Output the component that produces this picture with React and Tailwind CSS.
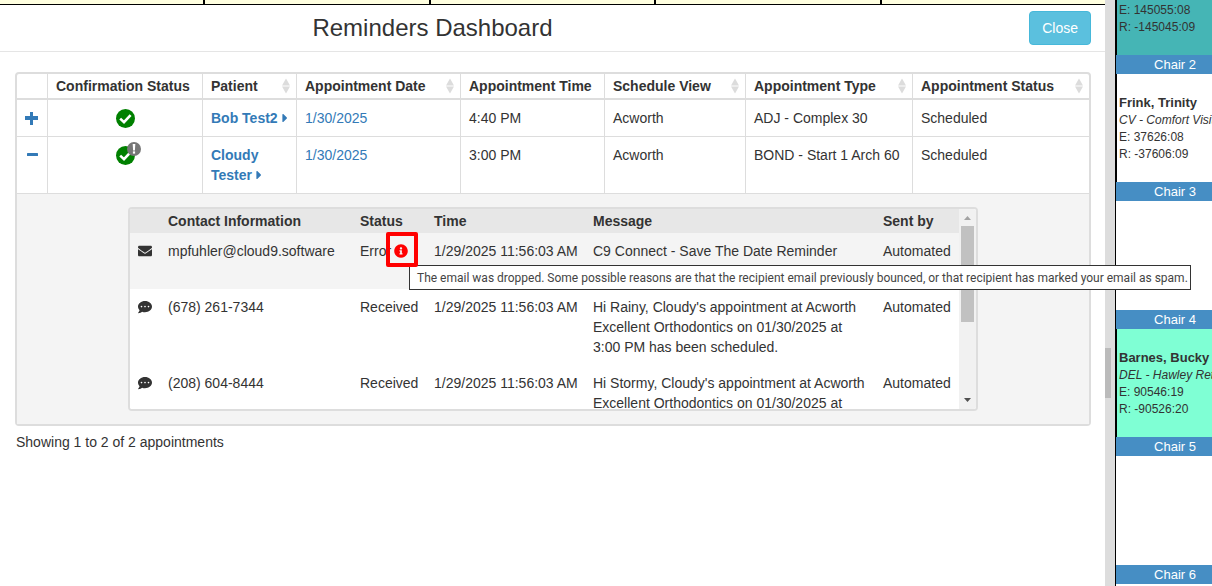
import React, { useState } from "react";
import { FaCaretRight, FaCommentDots, FaEnvelope, FaInfoCircle } from "react-icons/fa";

const columns = [
  { label: "Confirmation Status", width: "w-[155px]" },
  { label: "Patient", width: "w-[94px]", sortable: true },
  { label: "Appointment Date", width: "w-[164px]", sortable: true },
  { label: "Appointment Time", width: "w-[144px]" },
  { label: "Schedule View", width: "w-[141px]", sortable: true },
  { label: "Appointment Type", width: "w-[167px]", sortable: true },
  { label: "Appointment Status", width: "w-[176px]", sortable: true },
];

const appointments = [
  {
    id: 1,
    patient: "Bob Test2",
    date: "1/30/2025",
    time: "4:40 PM",
    view: "Acworth",
    type: "ADJ - Complex 30",
    status: "Scheduled",
    reminders: [],
  },
  {
    id: 2,
    patient: "Cloudy Tester",
    date: "1/30/2025",
    time: "3:00 PM",
    view: "Acworth",
    type: "BOND - Start 1 Arch 60",
    status: "Scheduled",
    warning: true,
    reminders: [
      {
        kind: "email",
        contact: "mpfuhler@cloud9.software",
        status: "Error",
        time: "1/29/2025 11:56:03 AM",
        message: "C9 Connect - Save The Date Reminder",
      },
      {
        kind: "text",
        contact: "(678) 261-7344",
        status: "Received",
        time: "1/29/2025 11:56:03 AM",
        message:
          "Hi Rainy, Cloudy's appointment at Acworth Excellent Orthodontics on 01/30/2025 at 3:00 PM has been scheduled.",
      },
      {
        kind: "text",
        contact: "(208) 604-8444",
        status: "Received",
        time: "1/29/2025 11:56:03 AM",
        message: "Hi Stormy, Cloudy's appointment at Acworth Excellent Orthodontics on 01/30/2025 at",
      },
    ],
  },
];

const chairs = [
  {
    name: "Chair 2",
    height: "h-[108px]",
    color: "bg-white",
    patient: "Frink, Trinity",
    procedure: "CV - Comfort Visit",
    e: "37626:08",
    r: "-37606:09",
  },
  { name: "Chair 3", height: "h-[109px]" },
  {
    name: "Chair 4",
    height: "h-[108px]",
    color: "bg-[#7fffd4]",
    patient: "Barnes, Bucky",
    procedure: "DEL - Hawley Retainer",
    e: "90546:19",
    r: "-90526:20",
  },
  { name: "Chair 5", height: "h-[109px]" },
  { name: "Chair 6", height: "h-0" },
];

function SortIcon() {
  return (
    <svg width="8" height="16" viewBox="0 0 8 16" fill="#dcdcdc">
      <path d="M4 0.5 L8 7.5 H0 Z" />
      <path d="M0 8.5 H8 L4 15.5 Z" />
    </svg>
  );
}

function ToggleIcon({ open }) {
  return (
    <svg width="13" height="13" viewBox="0 0 13 13" fill="#337ab7">
      {open ? (
        <rect x="2" y="4" width="11" height="3" rx="0.5" />
      ) : (
        <path d="M5 0h3v4h5v4H8v5H5V8H0V4h5z" />
      )}
    </svg>
  );
}

function ConfirmedIcon() {
  return (
    <svg width="19" height="19" viewBox="0 0 19 19">
      <circle cx="9.5" cy="9.5" r="9.5" fill="#008000" />
      <path d="M4.2 9.6 L8 13.2 L14.6 6.2" fill="none" stroke="#fff" strokeWidth="2.6" />
    </svg>
  );
}

function WarningIcon() {
  return (
    <svg className="absolute left-[11px] -top-1" width="14" height="14" viewBox="0 0 14 14">
      <circle cx="7" cy="7" r="7" fill="#777" />
      <path d="M5.7 2 H8.3 L7.9 8.4 H6.1 Z" fill="#fff" />
      <rect x="5.9" y="9.4" width="2.2" height="2.2" fill="#fff" />
    </svg>
  );
}

function Scrollbar() {
  return (
    <div className="w-[17px] shrink-0 bg-[#f1f1f1] flex flex-col items-center">
      <svg width="17" height="17" viewBox="0 0 17 17" fill="#a3a3a3">
        <path d="M5 11 L8.5 7 L12 11 Z" />
      </svg>
      <div className="w-[13px] h-24 bg-[#c1c1c1]" />
      <svg className="mt-auto" width="17" height="17" viewBox="0 0 17 17" fill="#505050">
        <path d="M5 6 H12 L8.5 10 Z" />
      </svg>
    </div>
  );
}

function ReminderLog({ reminders }) {
  return (
    <div className="relative">
      <div className="h-[204px] flex border-2 border-[#ddd] rounded bg-white overflow-hidden">
        <div className="flex-1 overflow-hidden">
          <table className="w-full table-fixed text-left">
            <thead>
              <tr className="bg-[#e7e7e7]">
                <th className="w-[30px] px-2 py-0.5" />
                <th className="w-[192px] px-2 py-0.5">Contact Information</th>
                <th className="w-[74px] px-2 py-0.5">Status</th>
                <th className="w-[159px] px-2 py-0.5">Time</th>
                <th className="w-[290px] px-2 py-0.5">Message</th>
                <th className="w-[84px] px-2 py-0.5">Sent by</th>
              </tr>
            </thead>
            <tbody>
              {reminders.map((item, idx) => (
                <tr key={idx} className="h-14 align-top bg-white first:bg-[#f4f4f4]">
                  <td className="p-2">
                    <div className="h-5 flex items-center">
                      {item.kind === "email" ? (
                        <FaEnvelope className="size-[14px] shrink-0" />
                      ) : (
                        <FaCommentDots className="size-[14px] shrink-0" />
                      )}
                    </div>
                  </td>
                  <td className="p-2">{item.contact}</td>
                  <td className="py-2 pl-2 whitespace-nowrap">
                    {item.status}
                    {item.status === "Error" && (
                      <FaInfoCircle className="inline ml-[3px] size-[14px] align-[-2px] text-[#f00]" />
                    )}
                  </td>
                  <td className="py-2 pl-2 whitespace-nowrap">{item.time}</td>
                  <td className="p-2">{item.message}</td>
                  <td className="py-2 pl-2">Automated</td>
                </tr>
              ))}
            </tbody>
          </table>
        </div>
        <Scrollbar />
      </div>

      {/* Error explanation */}
      <div
        role="tooltip"
        className="absolute left-[281px] top-[58px] z-10 w-[782px] h-[25px] px-[7px] flex items-center border border-[#333] bg-white whitespace-nowrap font-[Roboto,sans-serif] text-[12px] text-[#444]"
      >
        The email was dropped. Some possible reasons are that the recipient email previously bounced, or that recipient has marked your email as spam.
      </div>
      <div className="absolute left-[258px] top-[25px] z-20 w-8 h-[35px] border-4 border-[#f00] rounded-xs" />
    </div>
  );
}

function AppointmentRow({ appt, open, onToggle }) {
  const cell = "p-2 border-r border-b border-[#ddd]";

  return (
    <>
      <tr className="align-top">
        <td className="border-r border-b border-[#ddd] py-2">
          <button
            className="w-full h-5 pr-px flex items-center justify-center"
            aria-label={open ? "Collapse" : "Expand"}
            onClick={onToggle}
          >
            <ToggleIcon open={open} />
          </button>
        </td>
        <td className={cell}>
          <div className="h-5 flex items-center justify-center">
            <span className="relative">
              <ConfirmedIcon />
              {appt.warning && <WarningIcon />}
            </span>
          </div>
        </td>
        <td className="py-2 pl-2 border-r border-b border-[#ddd]">
          <a href="#" className="font-bold text-[#337ab7]">
            {appt.patient}
            <FaCaretRight className="inline size-[14px] align-[-2px]" />
          </a>
        </td>
        <td className={cell}>
          <a href="#" className="text-[#337ab7]">{appt.date}</a>
        </td>
        <td className={cell}>{appt.time}</td>
        <td className={cell}>{appt.view}</td>
        <td className={cell}>{appt.type}</td>
        <td className="p-2 border-b border-[#ddd]">{appt.status}</td>
      </tr>
      {open && (
        <tr>
          <td colSpan={8} className="bg-[#f4f4f4] px-[111px] py-[13px]">
            <ReminderLog reminders={appt.reminders} />
          </td>
        </tr>
      )}
    </>
  );
}

function ChairInfo({ patient, procedure, e, r }) {
  return (
    <div className="pl-0.5 text-[12px] leading-[17px] whitespace-nowrap">
      {patient && <p className="text-[13px] leading-[18px] font-bold">{patient}</p>}
      {procedure && <p className="italic">{procedure}</p>}
      <p>E: {e}</p>
      <p>R: {r}</p>
    </div>
  );
}

function ChairSidebar() {
  return (
    <aside className="w-[97px] shrink-0 overflow-hidden border-l border-black">
      <div className="w-[118px]">
        <div className="h-[55px] pt-0.5 border-l border-black bg-[#45b5b5]">
          <ChairInfo e="145055:08" r="-145045:09" />
        </div>
        {chairs.map((chair) => (
          <section key={chair.name}>
            <h2 className="h-[19px] bg-[#468ec4] text-white text-[13px] leading-[19px] text-center">
              {chair.name}
            </h2>
            {chair.patient ? (
              <div className={`${chair.height} ${chair.color} pt-5 border-l border-black`}>
                <ChairInfo {...chair} />
              </div>
            ) : (
              <div className={chair.height} />
            )}
          </section>
        ))}
      </div>
    </aside>
  );
}

export default function App() {
  const [openId, setOpenId] = useState(2);

  return (
    <div className="min-h-screen flex bg-white text-[#333] text-[14px] leading-5 font-['Liberation_Sans',Arial,sans-serif]">
      <main className="flex-1 min-w-0">
        {/* Bottom edge of the schedule grid */}
        <div className="h-[5px] grid grid-cols-[205fr_226fr_225fr_226fr_223fr] border-b border-black bg-[#ffffe0]">
          <div className="border-r-2 border-black" />
          <div className="border-r-2 border-black" />
          <div className="border-r-2 border-black" />
          <div className="border-r-2 border-black" />
          <div />
        </div>

        <header className="h-[47px] flex items-center border-b border-[#e5e5e5]">
          <h1 className="flex-1 text-center text-[24px] leading-7">Reminders Dashboard</h1>
          <div className="w-60 pr-[14px] flex justify-end">
            <button className="px-3 py-1.5 rounded border border-[#46b8da] bg-[#5bc0de] text-white">
              Close
            </button>
          </div>
        </header>

        <div className="pt-5 pl-[15px] pr-[14px]">
          <div className="border-2 border-[#ddd] rounded">
            <table className="w-full table-fixed border-separate border-spacing-0 text-left">
              <thead>
                <tr>
                  <th className="w-[31px] border-r border-b-2 border-[#ddd]" />
                  {columns.map((col) => (
                    <th
                      key={col.label}
                      className={`${col.width} py-0.5 pl-2 border-r border-b-2 border-[#ddd] last:border-r-0 whitespace-nowrap`}
                    >
                      {col.sortable ? (
                        <button className="w-full pr-1.5 flex items-center justify-between">
                          {col.label}
                          <SortIcon />
                        </button>
                      ) : (
                        col.label
                      )}
                    </th>
                  ))}
                </tr>
              </thead>
              <tbody>
                {appointments.map((appt) => (
                  <AppointmentRow
                    key={appt.id}
                    appt={appt}
                    open={openId === appt.id}
                    onToggle={() => setOpenId(openId === appt.id ? null : appt.id)}
                  />
                ))}
              </tbody>
            </table>
          </div>
          <p className="pt-1.5 pl-px">Showing 1 to 2 of 2 appointments</p>
        </div>
      </main>

      {/* Page scroll track */}
      <div className="w-[10px] shrink-0 bg-[#ddd] pt-[348px]">
        <div className="w-1.5 h-[50px] bg-[#bbb]" />
      </div>

      <ChairSidebar />
    </div>
  );
}
